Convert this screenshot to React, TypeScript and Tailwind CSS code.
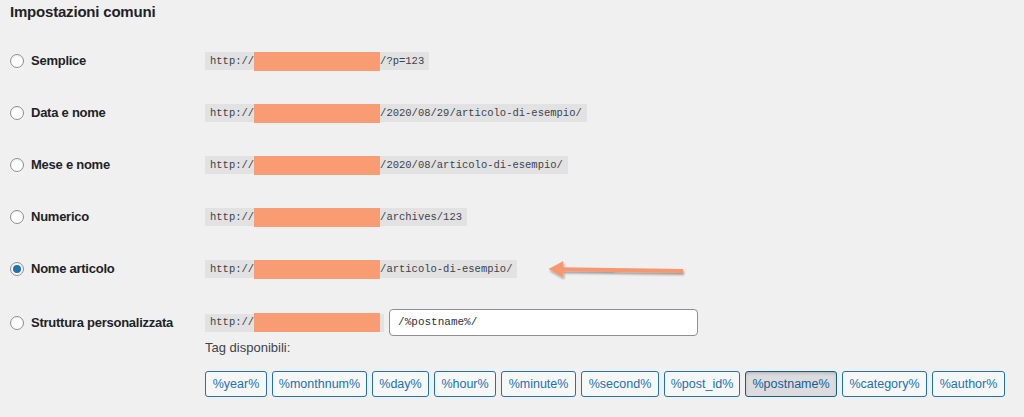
import React from 'react';

const rows = [
  { id: 'plain', label: 'Semplice', tail: '/?p=123' },
  { id: 'day', label: 'Data e nome', tail: '/2020/08/29/articolo-di-esempio/' },
  { id: 'month', label: 'Mese e nome', tail: '/2020/08/articolo-di-esempio/' },
  { id: 'num', label: 'Numerico', tail: '/archives/123' },
  { id: 'post', label: 'Nome articolo', tail: '/articolo-di-esempio/', checked: true },
];

const tags = [
  { tag: '%year%', w: 'w-[62px]' },
  { tag: '%monthnum%', w: 'w-[95px]' },
  { tag: '%day%', w: 'w-[57px]' },
  { tag: '%hour%', w: 'w-[62px]' },
  { tag: '%minute%', w: 'w-[75px]' },
  { tag: '%second%', w: 'w-[78px]' },
  { tag: '%post_id%', w: 'w-[76px]' },
  { tag: '%postname%', w: 'w-[92px]', active: true },
  { tag: '%category%', w: 'w-[85px]' },
  { tag: '%author%', w: 'w-[73px]' },
];

const sans = "font-['Liberation_Sans',Arial,sans-serif]";
const mono = "font-['Liberation_Mono','DejaVu_Sans_Mono',monospace]";

function Radio({ checked }: { checked?: boolean }) {
  return (
    <span className="w-[14px] h-[14px] rounded-full border border-[#8c8f94] bg-white flex items-center justify-center shrink-0 shadow-[inset_0_1px_2px_rgba(0,0,0,0.08)]">
      {checked && <span className="w-[8px] h-[8px] rounded-full bg-[#2271b1]" />}
    </span>
  );
}

function Label({ text, checked }: { text: string; checked?: boolean }) {
  return (
    <div className="w-[205px] pl-[10px] flex items-center gap-[7px] shrink-0">
      <Radio checked={checked} />
      <span className="text-[13px] font-bold tracking-[-0.25px] text-[#1d2327] leading-[18px]">{text}</span>
    </div>
  );
}

function Url({ tail }: { tail?: string }) {
  return (
    <code className={`${mono} inline-flex items-center h-[18px] bg-[#e2e2e3] text-[10.5px] text-[#3c434a] pl-[5px] ${tail ? 'pr-[5px]' : 'pr-[4px]'}`}>
      <span className="pt-[1px]">http://</span>
      <span className="w-[126px] h-[19px] bg-[#f99b73]" />
      {tail && <span className="pt-[1px]">{tail}</span>}
    </code>
  );
}

export default function App() {
  return (
    <div className={`${sans} relative w-full h-[417px] overflow-hidden bg-[#f0f0f1]`}>
      {/* Title */}
      <div className="h-[35px] pt-[2px] pl-[10px]">
        <h2 className="text-[15px] font-bold tracking-[-0.2px] leading-[20px] text-[#1d2327]">Impostazioni comuni</h2>
      </div>

      {rows.map(r => (
        <div key={r.id} className="h-[52px] flex items-center">
          <Label text={r.label} checked={r.checked} />
          <Url tail={r.tail} />
        </div>
      ))}

      {/* Custom structure */}
      <div className="flex items-start pt-[14px]">
        <div className="h-[27px] flex items-center">
          <Label text="Struttura personalizzata" />
        </div>
        <div className="flex flex-col">
          <div className="h-[27px] flex items-center gap-[5px]">
            <Url />
            <div className={`${mono} w-[309px] h-[27px] bg-white border border-[#8c8f94] rounded-[4px] flex items-center pl-[8px] text-[11px] text-[#2c3338]`}>
              /%postname%/
            </div>
          </div>
          <div className="mt-[3px] text-[13px] leading-[18px] text-[#3c434a]">Tag disponibili:</div>
          <div className="mt-[14px] flex gap-[5px]">
            {tags.map(t => (
              <button
                key={t.tag}
                className={`${t.w} h-[26px] rounded-[3px] border text-[12.5px] flex items-center justify-center ${
                  t.active
                    ? 'bg-[#dcdcde] border-[#135e96] text-[#135e96] shadow-[inset_0_2px_5px_-3px_rgba(0,0,0,0.5)]'
                    : 'bg-[#f6f7f7] border-[#2271b1] text-[#2271b1]'
                }`}
              >
                {t.tag}
              </button>
            ))}
          </div>
        </div>
      </div>

      {/* Annotation arrow */}
      <svg className="absolute left-[540px] top-[255px]" width="150" height="30" viewBox="540 255 150 30">
        <defs>
          <filter id="sh" x="-10%" y="-50%" width="120%" height="200%">
            <feDropShadow dx="1" dy="2" stdDeviation="1" floodColor="#000" floodOpacity="0.35" />
          </filter>
        </defs>
        <g filter="url(#sh)" fill="#f7976f" stroke="#f7976f">
          <line x1="560" y1="269.3" x2="683" y2="271" strokeWidth="4" />
          <polygon points="549,269 563,261.5 563,277" strokeWidth="0.5" strokeLinejoin="round" />
        </g>
      </svg>
    </div>
  );
}
